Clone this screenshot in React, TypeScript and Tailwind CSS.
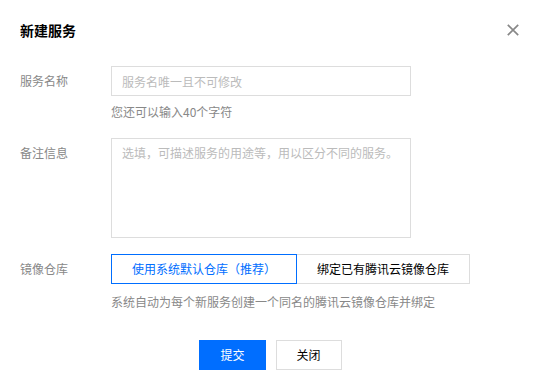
import { useState } from 'react'

const font = { fontFamily: '"Noto Sans CJK SC", "Noto Sans", sans-serif' }

export default function App() {
  const [mode, setMode] = useState<'default' | 'bind'>('default')

  return (
    <div className="w-[541px] h-[389px] bg-white text-[12px] text-black px-5 pt-5" style={font}>
      {/* Header */}
      <div className="flex items-center justify-between h-5">
        <h3 className="text-[14px] leading-5 font-bold text-black">新建服务</h3>
        <button className="w-3 h-3 flex items-center justify-center text-[#888] mr-[2px]">
          <svg width="12" height="12" viewBox="0 0 12 12" fill="none" stroke="currentColor" strokeWidth="1.7">
            <path d="M0.8 0.8l10.4 10.4M11.2 0.8L0.8 11.2" />
          </svg>
        </button>
      </div>

      {/* Form */}
      <div className="mt-[26px]">
        <div className="flex">
          <label className="w-[91px] leading-[30px] text-[#888]">服务名称</label>
          <div>
            <input
              type="text"
              placeholder="服务名唯一且不可修改"
              className="w-[300px] h-[30px] border border-[#ddd] px-[10px] outline-none placeholder:text-[#bbb]"
            />
            <p className="mt-[6px] leading-5 text-[#888]">您还可以输入40个字符</p>
          </div>
        </div>

        <div className="flex mt-4">
          <label className="w-[91px] leading-[30px] text-[#888]">备注信息</label>
          <textarea
            placeholder="选填，可描述服务的用途等，用以区分不同的服务。"
            className="w-[300px] h-[100px] border border-[#ddd] px-[10px] py-[5px] leading-[18px] outline-none resize-none placeholder:text-[#bbb]"
          />
        </div>

        <div className="flex mt-4">
          <label className="w-[91px] leading-[30px] text-[#888]">镜像仓库</label>
          <div>
            <div className="flex">
              <button
                onClick={() => setMode('default')}
                className={`h-[30px] px-5 border ${mode === 'default' ? 'border-[#006eff] text-[#006eff]' : 'border-[#ddd] text-black'}`}
              >
                使用系统默认仓库（推荐）
              </button>
              <button
                onClick={() => setMode('bind')}
                className={`h-[30px] px-5 border border-l-0 ${mode === 'bind' ? 'border-[#006eff] text-[#006eff]' : 'border-[#ddd] text-black'}`}
              >
                绑定已有腾讯云镜像仓库
              </button>
            </div>
            <p className="mt-2 leading-5 text-[#888]">系统自动为每个新服务创建一个同名的腾讯云镜像仓库并绑定</p>
          </div>
        </div>
      </div>

      {/* Footer */}
      <div className="flex justify-center gap-[10px] mt-7">
        <button className="h-[30px] min-w-[66px] px-5 bg-[#006eff] text-white border border-[#006eff]">提交</button>
        <button className="h-[30px] min-w-[66px] px-5 bg-white text-black border border-[#ddd]">关闭</button>
      </div>
    </div>
  )
}
